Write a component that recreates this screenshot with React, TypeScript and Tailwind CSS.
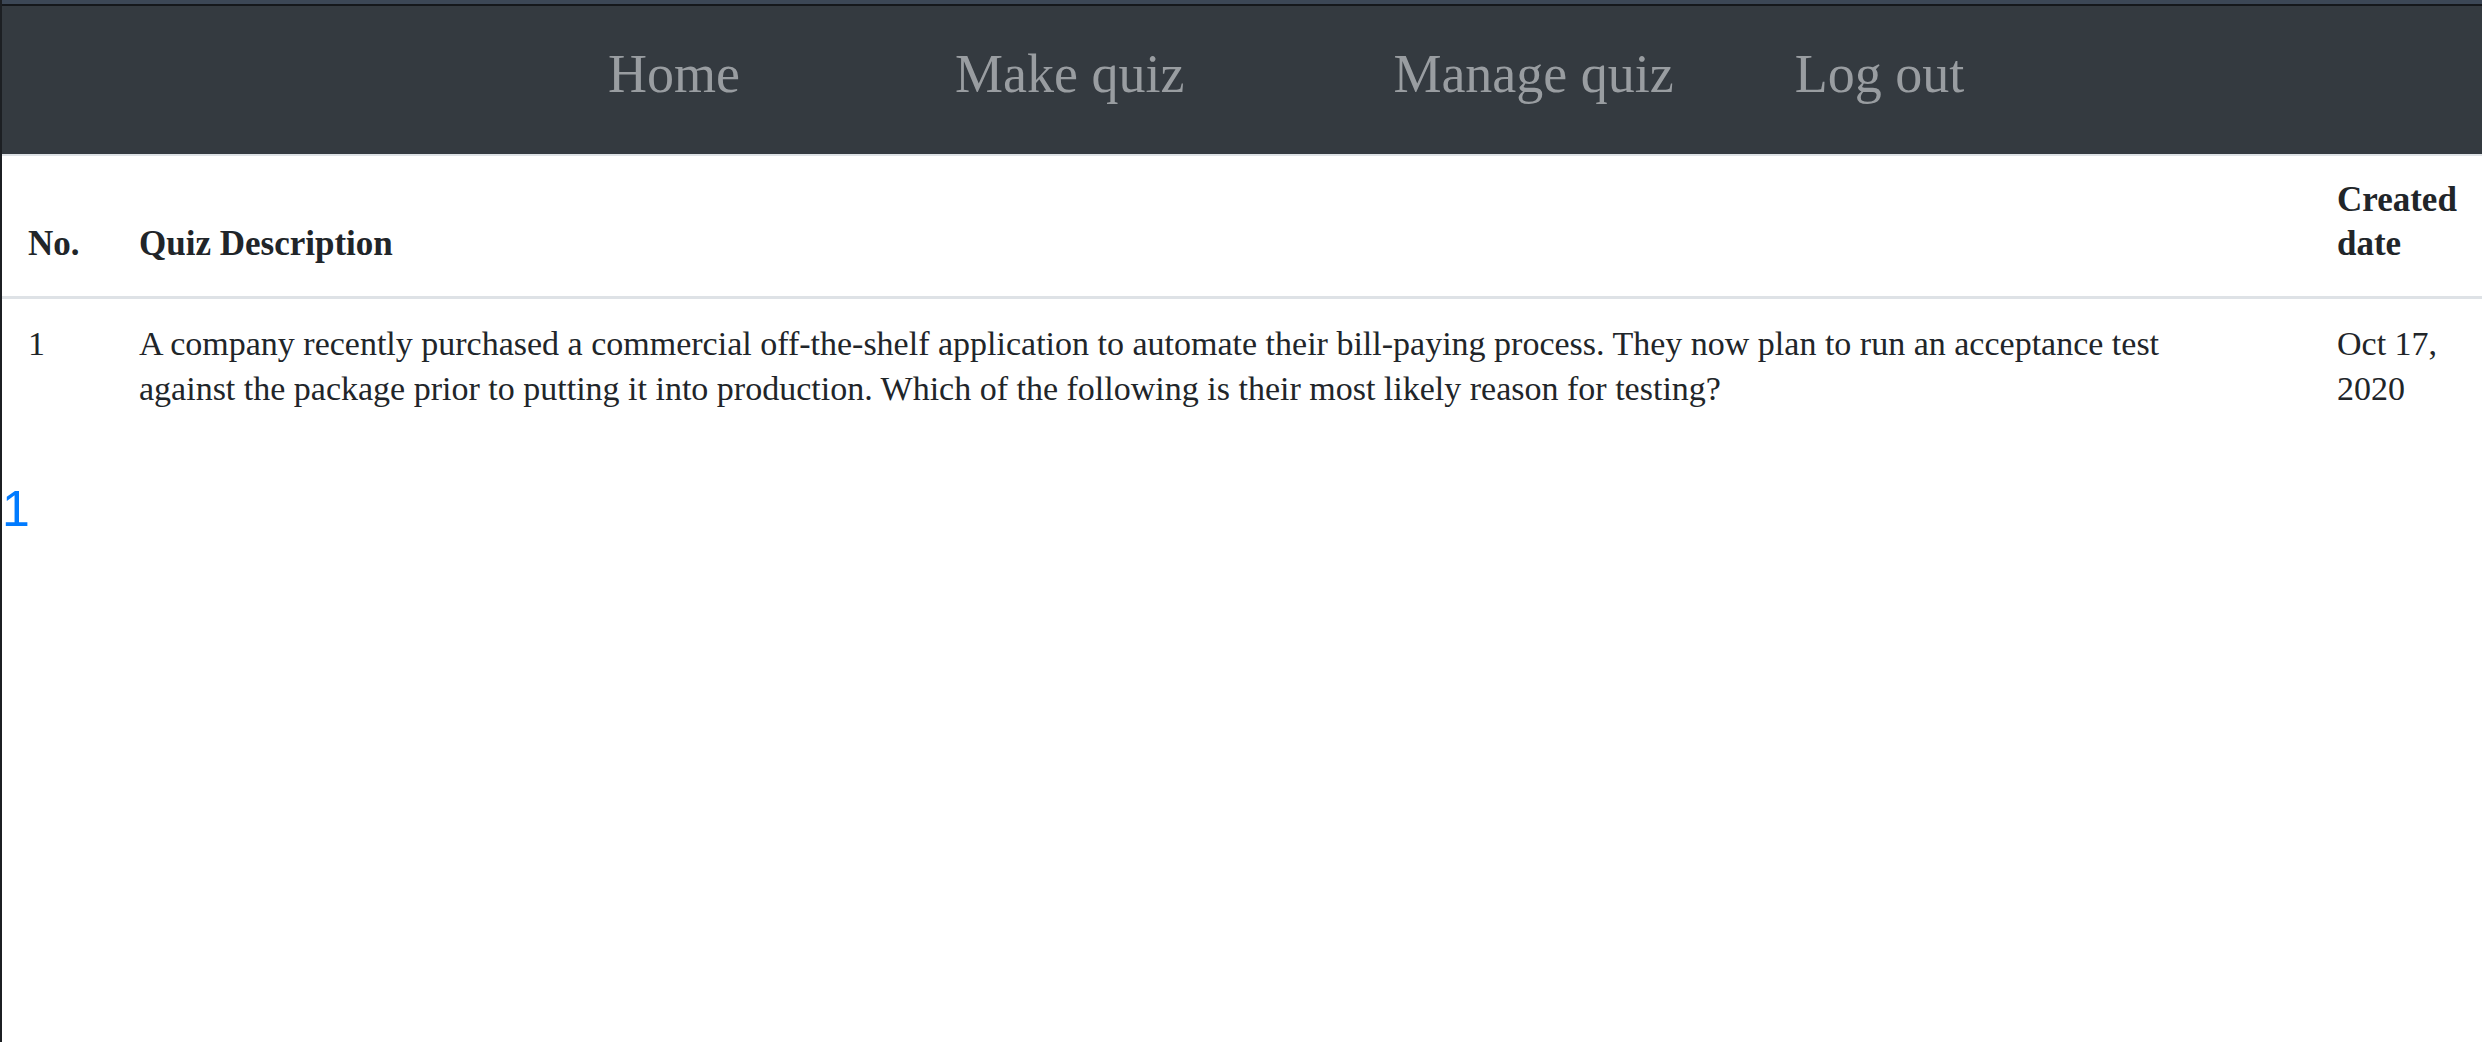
import React from 'react';

const navLinks = [
  { label: 'Home', className: 'ml-[606px]' },
  { label: 'Make quiz', className: 'ml-[215px]' },
  { label: 'Manage quiz', className: 'ml-[209px]' },
  { label: 'Log out', className: 'ml-[121px]' },
];

const quizzes = [
  {
    id: 1,
    description:
      'A company recently purchased a commercial off-the-shelf application to automate their bill-paying process. They now plan to run an acceptance test against the package prior to putting it into production. Which of the following is their most likely reason for testing?',
    createdAt: 'Oct 17, 2020',
  },
];

const NavBar = () => (
  <header>
    <div className="h-[4px] bg-[#3c4756]" />
    <div className="h-[2px] bg-[#15181c]" />
    <nav className="flex h-[148px] items-start bg-[#343a40] pt-[41px]">
      {navLinks.map((link) => (
        <a
          key={link.label}
          href="#"
          className={`${link.className} whitespace-nowrap text-[54px] leading-none text-[#999da1] hover:text-white`}
        >
          {link.label}
        </a>
      ))}
    </nav>
    <div className="h-[2px] bg-[#dee2e6]" />
  </header>
);

const QuizTable = () => (
  <table className="w-full table-fixed border-collapse text-left text-[#212529]">
    <colgroup>
      <col className="w-[111px]" />
      <col />
      <col className="w-[171px]" />
    </colgroup>
    <thead>
      <tr className="border-b-[3px] border-[#dee2e6]">
        <th className="px-[26px] pt-[22px] pb-[30px] align-bottom text-[35px] leading-[44px] font-bold">No.</th>
        <th className="px-[26px] pt-[22px] pb-[30px] align-bottom text-[35px] leading-[44px] font-bold">Quiz Description</th>
        <th className="px-[26px] pt-[22px] pb-[30px] align-bottom text-[35px] leading-[44px] font-bold">Created date</th>
      </tr>
    </thead>
    <tbody>
      {quizzes.map((quiz) => (
        <tr key={quiz.id}>
          <td className="px-[26px] pt-[22px] pb-[22px] align-top text-[34px] leading-[45px]">{quiz.id}</td>
          <td className="pl-[26px] pr-[67px] pt-[22px] pb-[22px] align-top text-[34px] leading-[45px]">{quiz.description}</td>
          <td className="px-[26px] pt-[22px] pb-[22px] align-top text-[34px] leading-[45px]">{quiz.createdAt}</td>
        </tr>
      ))}
    </tbody>
  </table>
);

export default function App() {
  return (
    <div className="min-h-screen border-l-2 border-[#1c1f23] bg-white font-['Liberation_Serif',serif]">
      <NavBar />
      <QuizTable />
      {/* pagination */}
      <div className="mt-[51px] font-['Liberation_Sans',sans-serif] text-[50px] leading-none">
        <a href="#" className="text-[#007bff]">1</a>
      </div>
    </div>
  );
}
